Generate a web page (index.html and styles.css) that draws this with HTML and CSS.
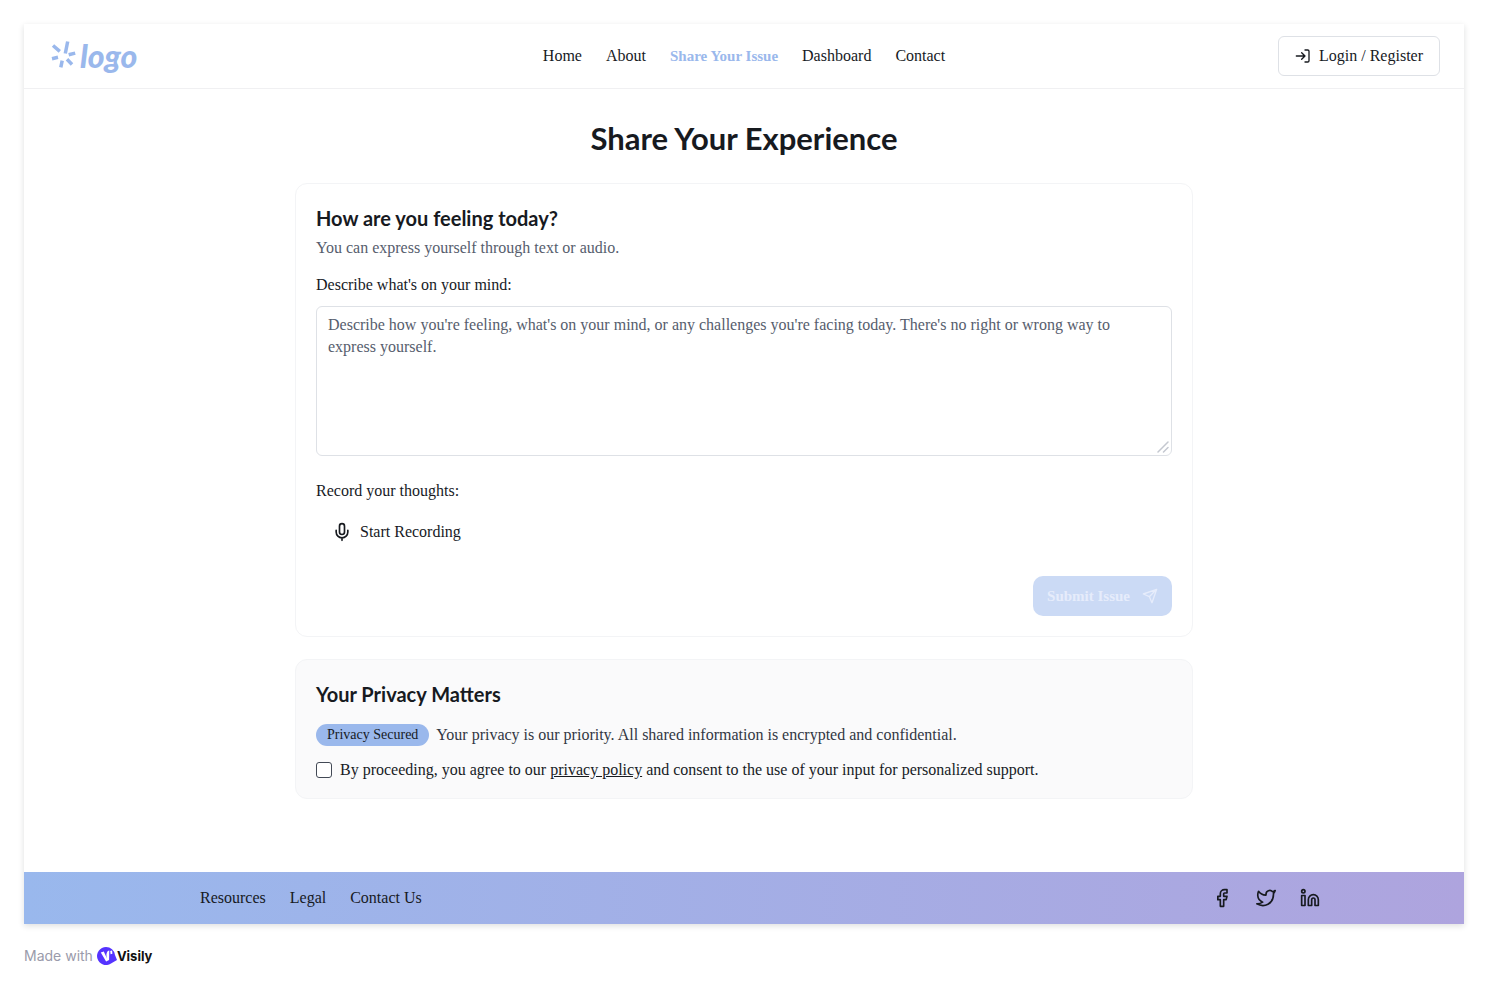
FILE: index.html
```html
<!DOCTYPE html>
<html lang="en">
<head>
<meta charset="utf-8">
<meta name="viewport" content="width=device-width, initial-scale=1">
<title>Share Your Experience</title>
<link rel="stylesheet" href="styles.css">
</head>
<body>
<div class="frame">
  <header class="header">
    <a class="logo" href="#">
      <svg class="logo-mark" viewBox="0 0 28 32" aria-hidden="true"><path d="M17.700 1.500 15.300 13.500M3 5.500l6.800 5.900M18.700 14.800l6.500-1.700M2 18.700l6-1.400M12.200 20.700l-1.400 6.600M17 19.300l5 5.200"/></svg>
      <span class="logo-word">logo</span>
    </a>
    <nav class="nav">
      <a href="#">Home</a>
      <a href="#">About</a>
      <a class="active" href="#">Share Your Issue</a>
      <a href="#">Dashboard</a>
      <a href="#">Contact</a>
    </nav>
    <button class="login" type="button">
      <svg class="icon-sm" viewBox="0 0 24 24" aria-hidden="true"><path d="M15 3h4a2 2 0 0 1 2 2v14a2 2 0 0 1-2 2h-4M10 17l5-5-5-5M15 12H2"/></svg>
      Login / Register
    </button>
  </header>

  <main class="main">
    <h1>Share Your Experience</h1>
    <form class="stack">
      <section class="card">
        <h2>How are you feeling today?</h2>
        <p class="sub">You can express yourself through text or audio.</p>
        <label class="label" for="mind">Describe what's on your mind:</label>
        <div class="area-wrap">
          <textarea id="mind" placeholder="Describe how you're feeling, what's on your mind, or any challenges you're facing today. There's no right or wrong way to express yourself."></textarea>
          <svg class="grip" viewBox="0 0 12 12" aria-hidden="true"><path d="M1 11 11 1M6.500 11 11 6.500"/></svg>
        </div>
        <p class="label">Record your thoughts:</p>
        <button class="record" type="button">
          <svg class="icon" viewBox="0 0 24 24" aria-hidden="true"><path d="M12 2a3 3 0 0 0-3 3v7a3 3 0 0 0 6 0V5a3 3 0 0 0-3-3zM19 10v2a7 7 0 0 1-14 0v-2M12 19v3"/></svg>
          Start Recording
        </button>
        <button class="submit" type="submit" disabled>
          Submit Issue
          <svg class="icon-sm" viewBox="0 0 24 24" aria-hidden="true"><path d="M22 2 15 22l-4-9-9-4zM22 2 11 13"/></svg>
        </button>
      </section>

      <section class="card card-muted">
        <h2>Your Privacy Matters</h2>
        <p class="privacy"><span class="badge">Privacy Secured</span>Your privacy is our priority. All shared information is encrypted and confidential.</p>
        <div class="consent">
          <input type="checkbox" id="agree">
          <label for="agree">By proceeding, you agree to our <a href="#">privacy policy</a> and consent to the use of your input for personalized support.</label>
        </div>
      </section>
    </form>
  </main>

  <footer class="footer">
    <nav class="footer-links">
      <a href="#">Resources</a>
      <a href="#">Legal</a>
      <a href="#">Contact Us</a>
    </nav>
    <div class="social">
      <a href="#" aria-label="Facebook"><svg class="icon" viewBox="0 0 24 24"><path d="M18 2h-3a5 5 0 0 0-5 5v3H7v4h3v8h4v-8h3l1-4h-4V7a1 1 0 0 1 1-1h3z"/></svg></a>
      <a href="#" aria-label="Twitter"><svg class="icon" viewBox="0 0 24 24"><path d="M23 3a10.900 10.900 0 0 1-3.140 1.530 4.480 4.480 0 0 0-7.860 3v1A10.660 10.660 0 0 1 3 4s-4 9 5 13a11.640 11.640 0 0 1-7 2c9 5 20 0 20-11.500a4.500 4.500 0 0 0-.08-.83A7.720 7.720 0 0 0 23 3z"/></svg></a>
      <a href="#" aria-label="LinkedIn"><svg class="icon" viewBox="0 0 24 24"><path d="M16 8a6 6 0 0 1 6 6v7h-4v-7a2 2 0 0 0-4 0v7h-4v-7a6 6 0 0 1 6-6zM2 9h4v12H2z"/><circle cx="4" cy="4" r="2"/></svg></a>
    </div>
  </footer>
</div>

<div class="made">
  Made with
  <a class="visily" href="#">
    <svg viewBox="0 0 20 20" aria-hidden="true"><path fill="#5533ff" d="M9 1a9 9 0 0 1 9 8l2 5-6 3.500A9 9 0 1 1 9 1z"/><path fill="#fff" d="m3.800 6.500 3-1.100 3.200 7.200c-.8-2.800-1-5.600.8-7.600l1.500-.4-.2 9.400-3 1.400zM13.200 5l1.900-.5.300 3.200-1.800.6z"/></svg>
    Visily
  </a>
</div>
</body>
</html>
```
FILE: styles.css
```css
* { box-sizing: border-box; }

body {
  margin: 0;
  padding: 24px;
  background: #fff;
  color: #171a1f;
  font: 16px/22px "Liberation Serif", serif;
}

a { color: inherit; text-decoration: none; }
h1, h2, p { margin: 0; }
h1, h2 { font-family: Lato, sans-serif; font-weight: 700; }
h1 { font-size: 31px; line-height: 38px; text-align: center; margin-bottom: 26px; }
h2 { font-size: 20px; line-height: 28px; }
button, textarea { font: inherit; color: inherit; }

svg { display: block; fill: none; stroke: currentColor; stroke-linecap: round; stroke-linejoin: round; }
.icon { width: 20px; height: 20px; stroke-width: 2; }
.icon-sm { width: 16px; height: 16px; stroke-width: 2; }

.frame {
  display: flex;
  flex-direction: column;
  min-height: calc(100vh - 88px);
  box-shadow: 0 2px 6px rgba(23, 26, 31, 0.14);
}

.header {
  display: grid;
  grid-template-columns: 1fr auto 1fr;
  align-items: center;
  padding: 12px 24px;
  border-bottom: 1px solid #f0f0f2;
}
.logo { display: flex; align-items: center; gap: 2px; height: 40px; padding-left: 2px; color: #9ab8ec; }
.logo-mark { width: 28px; height: 32px; stroke-width: 3.5; stroke-linecap: butt; }
.logo-word { font: italic 900 32px/40px Lato, sans-serif; }
.nav { display: flex; gap: 24px; }
.nav .active { color: #9ab8ec; font-size: 15px; font-weight: 700; }
.login {
  justify-self: end;
  display: flex;
  align-items: center;
  gap: 8px;
  height: 40px;
  padding: 0 16px;
  background: #fff;
  border: 1px solid #dee1e6;
  border-radius: 6px;
}

.main { flex: 1; padding: 30px 24px; }
.stack { display: flex; flex-direction: column; gap: 22px; max-width: 898px; margin: 0 auto; }
.card {
  display: flex;
  flex-direction: column;
  padding: 20px;
  border: 1px solid #f3f4f6;
  border-radius: 12px;
  background: #fff;
}
.card-muted { background: #fafafb; }
.sub { margin-top: 5px; color: #565d6d; }
.label { margin: 15px 0 10px; }
.area-wrap { position: relative; margin-bottom: 9px; }
textarea {
  display: block;
  width: 100%;
  height: 150px;
  padding: 7px 11px;
  border: 1px solid #dee1e6;
  border-radius: 6px;
  background: #fff;
  resize: none;
}
textarea::placeholder { color: #565d6d; opacity: 1; }
.grip { position: absolute; right: 3px; bottom: 3px; width: 12px; height: 12px; color: #c4c8d0; stroke-width: 1.5; }
.record {
  align-self: flex-start;
  display: flex;
  align-items: center;
  gap: 8px;
  height: 40px;
  padding: 0 16px;
  background: none;
  border: 0;
}
.submit {
  align-self: flex-end;
  display: flex;
  align-items: center;
  gap: 12px;
  height: 40px;
  margin-top: 24px;
  padding: 0 14px;
  border: 0;
  border-radius: 10px;
  background: #cbdaf5;
  color: #e6ecfb;
  font-size: 15px;
  font-weight: 700;
}
.privacy { display: flex; align-items: center; gap: 7px; margin-top: 16px; color: #323743; }
.badge {
  padding: 0 11px;
  border-radius: 11px;
  background: #9ab8ec;
  color: #171a1f;
  font-size: 14px;
  white-space: nowrap;
}
.consent { display: flex; align-items: center; gap: 8px; margin: 13px 0 -3px; }
.consent a { text-decoration: underline; }
.consent input {
  appearance: none;
  flex: none;
  width: 16px;
  height: 16px;
  margin: 0;
  border: 1px solid #424955;
  border-radius: 3px;
  background: #fff;
}

.footer {
  display: flex;
  justify-content: space-between;
  align-items: center;
  min-height: 52px;
  padding: 0 144px 0 176px;
  background: linear-gradient(90deg, #99b8ed, #aea4de);
}
.footer-links, .social { display: flex; gap: 24px; }

.made {
  display: flex;
  align-items: center;
  gap: 4px;
  margin-top: 22px;
  color: #9a9bab;
  font: 14px/20px Inter, sans-serif;
}
.visily { display: flex; align-items: center; color: #111; font-size: 13px; font-weight: 700; }
.visily svg { width: 20px; height: 20px; stroke: none; }
```
